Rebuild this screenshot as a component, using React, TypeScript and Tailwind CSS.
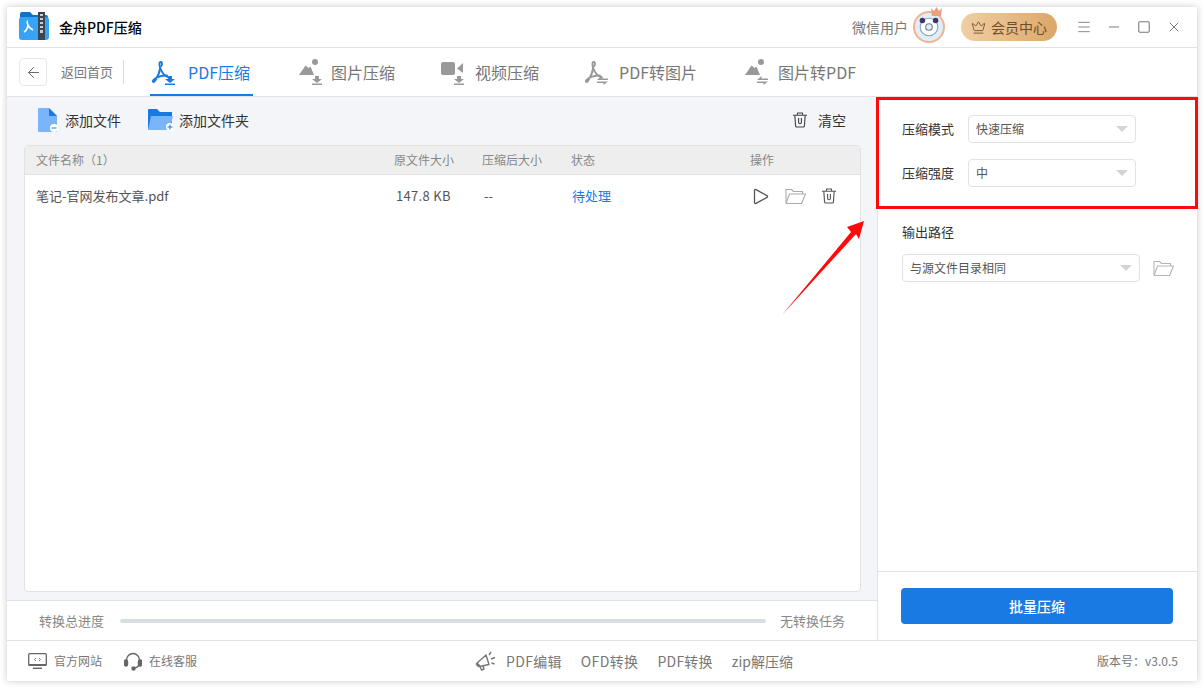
import { ArrowLeft, Menu, Minus, Square, X, Crown } from "lucide-react";
import type { ReactNode } from "react";

function PdfGlyph({ color }: { color: string }) {
  return (
    <svg width="20" height="24" viewBox="0 0 20 24" fill="none" stroke={color} strokeWidth="1.900" strokeLinecap="round">
      <path d="M9 2c-1.800-.5-2 2.500-.8 6 1.500 4.500 4 8 8.800 9.500" />
      <path d="M8.200 8C7.500 13 5 18 2.600 21.500c-1 1.300-2.200.2-1.400-1.200C3 17.500 9 15.500 15 15.500" />
      <path d="M9 2c1.200.3 1.200 2 .4 4" />
    </svg>
  );
}

function ImageGlyph() {
  return (
    <svg width="22" height="18" viewBox="0 0 22 18" fill="#999" className="-mt-[8px]">
      <circle cx="16" cy="3" r="3" />
      <path d="M0 16 6.500 6.500l3 2.500 2-1.500 3.500 8.500z" />
    </svg>
  );
}

function VideoGlyph() {
  return (
    <svg width="23" height="15" viewBox="0 0 23 15" fill="#999" className="-mt-[8px]">
      <rect x="0" y="1" width="14" height="13" rx="2" />
      <path d="M16 7.500 22 2v10z" />
    </svg>
  );
}

function DownArrow({ color }: { color: string }) {
  return (
    <svg width="10" height="9" viewBox="0 0 10 9" fill={color}>
      <path d="M3 0h4v3h3L5 7 0 3h3zM0 7.500h10V9H0z" />
    </svg>
  );
}

function SwapArrow() {
  return (
    <svg width="11" height="9" viewBox="0 0 11 9" fill="#999">
      <path d="M4.500 0v2.500H11V4H0zM0 5.500h11L6.500 9V7H0z" />
    </svg>
  );
}

function TrashGlyph({ color, size = 16 }: { color: string; size?: number }) {
  return (
    <svg width={size} height={size} viewBox="0 0 16 17" fill="none" stroke={color} strokeWidth="1.200">
      <path d="M.5 3.500h15M5 3.500 5.500 1h5l.5 2.500" />
      <path d="M2.500 3.500 3.300 15a1.200 1.200 0 0 0 1.200 1h7a1.200 1.200 0 0 0 1.200-1l.8-11.500" />
      <path d="M6.500 6.500v4.500a1.500 1.500 0 0 0 3 0V6.500" />
    </svg>
  );
}

function FolderGlyph({ color }: { color: string }) {
  return (
    <svg width="21" height="16" viewBox="0 0 21 16" fill="none" stroke={color} strokeWidth="1.100" strokeLinejoin="round">
      <path d="M1 14.500V1.500h5.500l2 2h9v2.500" />
      <path d="M1 15.500h15.500L20.500 6H4.500z" />
    </svg>
  );
}

function NavTab(props: { label: string; icon: ReactNode; badge: ReactNode; active?: boolean; className: string }) {
  return (
    <div className={`relative flex h-full items-center ${props.className} ${props.active ? "text-[#1a7ae4]" : "text-[#777]"}`}>
      <div className="relative ml-[2px] flex h-[24px] w-[24px] shrink-0 items-center justify-start">
        {props.icon}
        <span className="absolute right-[1px] -bottom-[1px] flex">{props.badge}</span>
      </div>
      <span className="text-[16px] whitespace-nowrap">{props.label}</span>
      {props.active && <span className="absolute bottom-0 left-0 h-[2px] w-full bg-[#1a7ae4]" />}
    </div>
  );
}

function Select({ value, width }: { value: string; width: string }) {
  return (
    <div className={`flex h-[28px] items-center justify-between rounded-[4px] border border-[#e2e2e2] bg-white pr-[7px] pl-[7px] text-[12px] text-[#555] ${width}`}>
      <span>{value}</span>
      <span className="h-0 w-0 border-x-[6px] border-t-[6px] border-x-transparent border-t-[#d4d4d4]" />
    </div>
  );
}

export default function App() {
  return (
    <div className="h-[688px] w-[1204px] overflow-hidden bg-white p-[7px] font-['Noto_Sans_CJK_SC','Noto_Sans',sans-serif]">
      <div className="relative flex h-[674px] w-[1190px] flex-col bg-white shadow-[0_0_7px_rgba(0,0,0,0.22)]">
        {/* title bar */}
        <header className="flex h-[41px] shrink-0 items-center border-b border-[#e2e2e2] pr-[15px] pl-[12px]">
          <svg width="30" height="30" viewBox="0 0 30 30" className="mt-[-2px]">
            <path d="M1 3a2 2 0 0 1 2-2h8l3 3h13a2 2 0 0 1 2 2v4H1z" fill="#1570c9" />
            <rect x="0" y="6" width="30" height="23" rx="3" fill="#36a3f5" />
            <rect x="19" y="1" width="7" height="28" fill="#3d4650" />
            <path d="M21 3h3v2h-3zM21 7h3v2h-3zM21 11h3v2h-3zM21 15h3v2h-3zM21 19h3v3h-3z" fill="#c9ccd0" />
            <path d="M9 10c-1 0-1 2 0 4 1 3 3 4 5 5M9 14c-.5 3-2 6-4 7" stroke="#fff" strokeWidth="1.600" fill="none" />
          </svg>
          <span className="ml-[10px] text-[14px] font-medium text-black">金舟PDF压缩</span>
          <span className="mr-[5px] ml-auto text-[14px] text-[#777]">微信用户</span>
          <div className="relative flex h-[32px] w-[32px] items-center justify-center rounded-full border-2 border-[#eeb58f] bg-[#dfeefa]">
            <svg width="22" height="22" viewBox="0 0 20 20">
              <circle cx="10" cy="10" r="8" fill="#fff" stroke="#8fa3b8" />
              <circle cx="4" cy="4" r="2.500" fill="#3d3560" />
              <circle cx="16" cy="4" r="2.500" fill="#3d3560" />
              <circle cx="10" cy="10" r="3" fill="#e6eef5" stroke="#6a7d90" />
            </svg>
            <svg className="absolute -top-[6px] right-[1px]" width="11" height="9" viewBox="0 0 11 9" fill="#e8a080">
              <path d="M0 1l3 3 2.500-4L8 4l3-3-1 8H1z" />
            </svg>
          </div>
          <div className="ml-[16px] flex h-[28px] w-[96px] items-center justify-center gap-[5px] rounded-full bg-gradient-to-r from-[#f0cfa4] to-[#dca768] text-[14px] text-[#6e4f2a]">
            <Crown size={15} strokeWidth={1.4} />
            <span>会员中心</span>
          </div>
          <Menu size={16} strokeWidth={1.5} className="ml-[19px] text-[#888]" />
          <Minus size={16} strokeWidth={1.3} className="ml-[14px] text-[#666]" />
          <Square size={14} strokeWidth={1.8} className="ml-[15px] text-[#777]" />
          <X size={16} strokeWidth={1.3} className="ml-[15px] text-[#666]" />
        </header>

        {/* nav */}
        <nav className="flex h-[49px] shrink-0 items-center border-b border-[#e2e2e2] pl-[12px]">
          <div className="flex h-[28px] w-[28px] items-center justify-center rounded-[4px] border border-[#e8e8e8] text-[#666]">
            <ArrowLeft size={17} strokeWidth={1.4} />
          </div>
          <span className="ml-[14px] text-[13px] text-[#777]">返回首页</span>
          <span className="ml-[10px] h-[24px] w-px bg-[#ddd]" />
          <div className="ml-[26px] flex h-full items-center gap-[44px]">
            <NavTab label="PDF压缩" active className="w-[103px] gap-[12px]" icon={<PdfGlyph color="#1a7ae4" />} badge={<DownArrow color="#1a7ae4" />} />
            <NavTab label="图片压缩" className="gap-[8px]" icon={<ImageGlyph />} badge={<DownArrow color="#999" />} />
            <NavTab label="视频压缩" className="gap-[10px]" icon={<VideoGlyph />} badge={<DownArrow color="#999" />} />
            <NavTab label="PDF转图片" className="gap-[10px]" icon={<PdfGlyph color="#999" />} badge={<SwapArrow />} />
            <NavTab label="图片转PDF" className="ml-[2px] gap-[9px]" icon={<ImageGlyph />} badge={<SwapArrow />} />
          </div>
        </nav>

        {/* body */}
        <div className="flex min-h-0 flex-1">
          <main className="flex w-[871px] shrink-0 flex-col border-r border-[#e2e2e2]">
            <div className="flex min-h-0 flex-1 flex-col bg-[#f4f5f9] pr-[16px] pb-[8px] pl-[17px]">
              <div className="flex h-[48px] shrink-0 items-center pb-[2px] text-[14px] text-[#333]">
                <div className="ml-[14px] flex items-center">
                  <svg width="20" height="24" viewBox="0 0 20 24">
                    <path d="M1 0h10l8 8v15a1 1 0 0 1-1 1H1a1 1 0 0 1-1-1V1a1 1 0 0 1 1-1z" fill="#7ab4fb" />
                    <path d="M11 0l8 8h-8z" fill="#1a7ae4" />
                    <circle cx="16" cy="20" r="4" fill="#fff" />
                    <path d="M13.500 20h5" stroke="#1a7ae4" />
                  </svg>
                  <span className="ml-[7px]">添加文件</span>
                </div>
                <div className="ml-[27px] flex items-center">
                  <svg width="25" height="22" viewBox="0 0 25 22">
                    <path d="M0 1a1 1 0 0 1 1-1h8l3 3h12v17H0z" fill="#1a7ae4" />
                    <path d="M3 7h22l-3 13a1 1 0 0 1-1 1H0z" fill="#7ab4fb" />
                    <circle cx="22" cy="18" r="4" fill="#fff" />
                    <path d="M19.500 18h5M22 15.500v5" stroke="#1a7ae4" />
                  </svg>
                  <span className="ml-[6px]">添加文件夹</span>
                </div>
                <div className="mr-[15px] ml-auto flex items-center">
                  <TrashGlyph color="#444" />
                  <span className="ml-[10px]">清空</span>
                </div>
              </div>
              <div className="flex min-h-0 flex-1 flex-col rounded-[4px] border border-[#e2e2e2] bg-white">
                <div className="grid h-[29px] shrink-0 grid-cols-[358px_88px_89px_179px_1fr] items-center border-b border-[#e2e2e2] bg-[#eeeeee] pl-[11px] text-[12px] text-[#888]">
                  <span>文件名称（1）</span>
                  <span>原文件大小</span>
                  <span>压缩后大小</span>
                  <span>状态</span>
                  <span>操作</span>
                </div>
                <div className="grid h-[42px] grid-cols-[360px_88px_88px_178px_1fr] items-center pl-[11px] text-[13px] text-[#555]">
                  <span>笔记-官网发布文章.pdf</span>
                  <span className="tracking-[0.3px]">147.8 KB</span>
                  <span>--</span>
                  <span className="text-[#1a7ae4]">待处理</span>
                  <div className="flex items-center">
                    <svg width="16" height="17" viewBox="0 0 16 17" fill="none" stroke="#555" strokeWidth="1.300" strokeLinejoin="round" className="ml-[3px]">
                      <path d="M1.500 2.500a1 1 0 0 1 1.500-.9l11 6a1 1 0 0 1 0 1.800l-11 6a1 1 0 0 1-1.500-.9z" />
                    </svg>
                    <span className="ml-[16px] flex">
                      <FolderGlyph color="#aaa" />
                    </span>
                    <span className="ml-[15px] flex">
                      <TrashGlyph color="#555" />
                    </span>
                  </div>
                </div>
              </div>
            </div>
            <div className="flex h-[40px] shrink-0 items-center border-t border-[#e2e2e2] pr-[32px] pl-[32px] text-[13px] text-[#888]">
              <span>转换总进度</span>
              <div className="mr-[14px] ml-[16px] h-[4px] flex-1 rounded-full bg-[#d8dde2]" />
              <span>无转换任务</span>
            </div>
          </main>

          <aside className="flex min-w-0 flex-1 flex-col">
            <div className="flex-1 pt-[18px] pl-[24px] text-[13px] text-[#333]">
              <div className="flex items-center gap-[14px]">
                <span>压缩模式</span>
                <Select value="快速压缩" width="w-[168px]" />
              </div>
              <div className="mt-[16px] flex items-center gap-[14px]">
                <span>压缩强度</span>
                <Select value="中" width="w-[168px]" />
              </div>
              <div className="mt-[35px]">输出路径</div>
              <div className="mt-[12px] flex items-center">
                <Select value="与源文件目录相同" width="w-[238px]" />
                <span className="ml-[13px] flex">
                  <FolderGlyph color="#b5b5b5" />
                </span>
              </div>
            </div>
            <div className="flex h-[69px] shrink-0 items-center border-t border-[#e2e2e2] pl-[23px]">
              <button type="button" className="h-[36px] w-[272px] rounded-[4px] bg-[#1a7ae4] text-[14px] font-medium text-white">
                批量压缩
              </button>
            </div>
          </aside>
        </div>

        {/* footer */}
        <footer className="relative flex h-[41px] shrink-0 items-center border-t border-[#e2e2e2] pr-[19px] pl-[21px] text-[12px] text-[#777]">
          <svg width="19" height="16" viewBox="0 0 19 16" fill="none" stroke="#666" strokeWidth="1.300">
            <rect x="0.700" y="0.700" width="17.600" height="11.600" rx="1" />
            <path d="M0.700 12h17.600" strokeWidth="2" />
            <path d="M5 15.300h9" strokeWidth="1.400" />
            <path d="M8 5 6.500 6.500 8 8M11 5l1.500 1.500L11 8" strokeWidth="0.900" />
          </svg>
          <span className="ml-[7px]">官方网站</span>
          <svg width="18" height="19" viewBox="0 0 18 19" fill="none" stroke="#666" strokeWidth="1.400" className="ml-[22px]">
            <path d="M2.500 10V8a6.500 6.500 0 0 1 13 0v2c0 3-2 5.500-5 6" />
            <rect x="0.500" y="8" width="3" height="6" rx="1.500" fill="#666" />
            <rect x="14.500" y="8" width="3" height="6" rx="1.500" fill="#666" />
            <circle cx="9.500" cy="16.500" r="1.500" fill="#666" />
          </svg>
          <span className="ml-[7px]">在线客服</span>
          <svg width="21" height="20" viewBox="0 0 21 20" fill="none" stroke="#777" strokeWidth="1.400" strokeLinejoin="round" className="ml-[278px]">
            <path d="M1.500 12.500 11 4l3 9.500-9.500 2z" />
            <path d="M1.500 12.500l3 3" strokeWidth="2.600" />
            <path d="M5 15.500l1.500 3.500 2.500-1-1-3" />
            <path d="M14 4l2-3M16 8l4-1.500M16.500 12l3 1" />
          </svg>
          <div className="ml-[10px] flex gap-[19px] text-[14px]">
            <span className="tracking-[0.3px]">PDF编辑</span>
            <span className="tracking-[0.4px]">OFD转换</span>
            <span className="tracking-[0.2px]">PDF转换</span>
            <span>zip解压缩</span>
          </div>
          <span className="ml-auto">版本号：v3.0.5</span>
        </footer>

        {/* annotation over the screenshot */}
        <div className="pointer-events-none absolute top-[90px] left-[869px] h-[112px] w-[322px] border-[3px] border-[#ff0a0a]" />
        <svg className="pointer-events-none absolute top-[211px] left-[773px]" width="88" height="100" viewBox="0 0 88 100">
          <path d="M2 97 71 14 67 9 84 3 79 21 76 16z" fill="#ff0a0a" />
        </svg>
      </div>
    </div>
  );
}
